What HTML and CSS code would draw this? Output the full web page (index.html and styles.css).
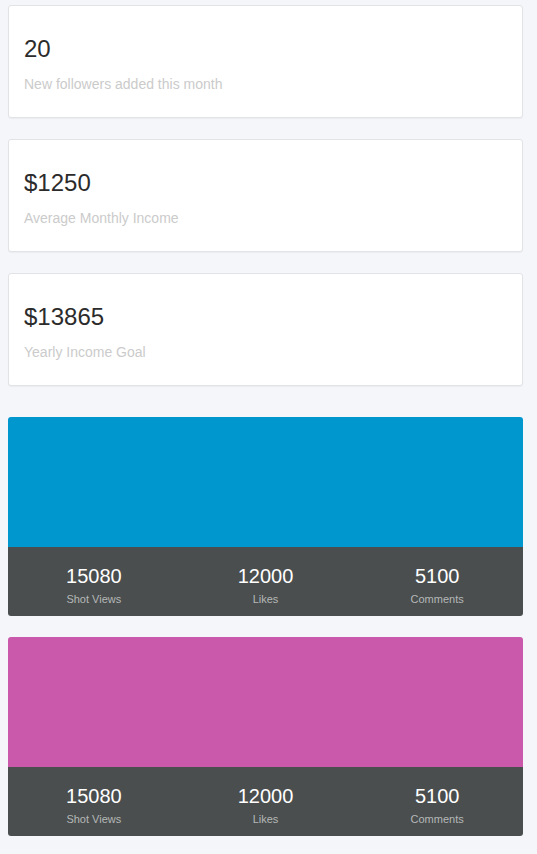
FILE: index.html
```html
<!DOCTYPE html>
<html lang="en">
<head>
<meta charset="utf-8">
<title>Stats</title>
<link rel="stylesheet" href="styles.css">
</head>
<body>
<main class="page">
  <section class="card">
    <h3 class="card-value">20</h3>
    <p class="card-label">New followers added this month</p>
  </section>
  <section class="card">
    <h3 class="card-value">$1250</h3>
    <p class="card-label">Average Monthly Income</p>
  </section>
  <section class="card">
    <h3 class="card-value">$13865</h3>
    <p class="card-label">Yearly Income Goal</p>
  </section>
  <section class="shot shot-first">
    <div class="shot-cover shot-blue"></div>
    <div class="shot-stats">
      <div class="stat"><span class="stat-num">15080</span><span class="stat-label">Shot Views</span></div>
      <div class="stat"><span class="stat-num">12000</span><span class="stat-label">Likes</span></div>
      <div class="stat"><span class="stat-num">5100</span><span class="stat-label">Comments</span></div>
    </div>
  </section>
  <section class="shot">
    <div class="shot-cover shot-pink"></div>
    <div class="shot-stats">
      <div class="stat"><span class="stat-num">15080</span><span class="stat-label">Shot Views</span></div>
      <div class="stat"><span class="stat-num">12000</span><span class="stat-label">Likes</span></div>
      <div class="stat"><span class="stat-num">5100</span><span class="stat-label">Comments</span></div>
    </div>
  </section>
</main>
</body>
</html>
```
FILE: styles.css
```css
html, body {
  margin: 0;
  padding: 0;
  background: #f5f6fa;
}
body {
  font-family: "Liberation Sans", Arial, Helvetica, sans-serif;
}
.page {
  width: 515px;
  padding: 5px 0 0 8px;
  display: flex;
  flex-direction: column;
  gap: 21px;
}
.card {
  box-sizing: border-box;
  height: 113px;
  background: #ffffff;
  border: 1px solid #e2e3e6;
  border-radius: 3px;
  box-shadow: 0 1px 1px rgba(0, 0, 0, 0.04);
  padding: 29px 15px 0;
}
.card-value {
  margin: 0;
  font-size: 24px;
  font-weight: normal;
  color: #2b2b2b;
  line-height: normal;
}
.card-label {
  margin: 13px 0 0;
  font-size: 14px;
  color: #cbcbcb;
  line-height: normal;
}
.shot {
  border-radius: 3px;
  overflow: hidden;
  height: 199px;
  display: flex;
  flex-direction: column;
}
.shot-first {
  margin-top: 10px;
}
.shot-cover {
  height: 130px;
}
.shot-blue { background: #0096ce; }
.shot-pink { background: #ca59ab; }
.shot-stats {
  box-sizing: border-box;
  height: 69px;
  background: #4a4e4e;
  display: grid;
  grid-template-columns: 1fr 1fr 1fr;
  padding-top: 18px;
}
.stat {
  display: flex;
  flex-direction: column;
  align-items: center;
  gap: 5px;
}
.stat-num {
  font-size: 20px;
  color: #ffffff;
  line-height: normal;
}
.stat-label {
  font-size: 11px;
  color: #b5b8b8;
  line-height: normal;
}
```
